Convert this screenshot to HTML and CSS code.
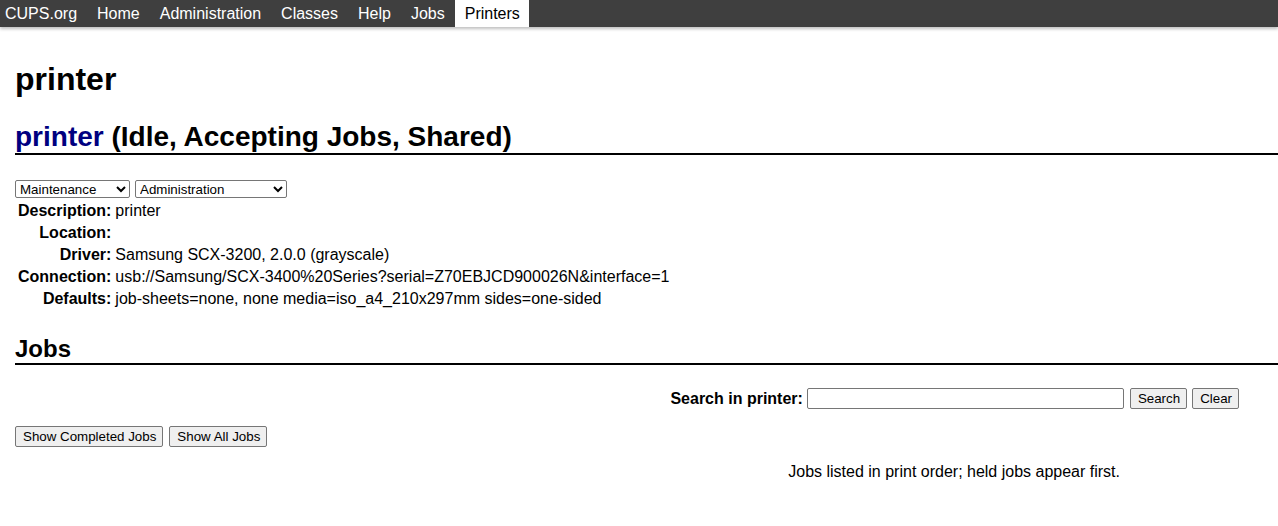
FILE: index.html
```html
<!DOCTYPE html>
<html>
<head>
<meta charset="utf-8">
<title>printer - CUPS</title>
<link rel="stylesheet" href="styles.css">
</head>
<body>
<nav class="topbar">
  <a class="nav-item first" href="#">CUPS.org</a>
  <a class="nav-item" href="#">Home</a>
  <a class="nav-item" href="#">Administration</a>
  <a class="nav-item" href="#">Classes</a>
  <a class="nav-item" href="#">Help</a>
  <a class="nav-item" href="#">Jobs</a>
  <a class="nav-item active" href="#">Printers</a>
</nav>
<main class="content">
  <h1 class="title">printer</h1>
  <h2 class="section printer-head"><a class="plink" href="#">printer</a> (Idle, Accepting Jobs, Shared)</h2>
  <div class="controls">
    <select class="sel sel-maint"><option>Maintenance</option></select>
    <select class="sel sel-admin"><option>Administration</option></select>
  </div>
  <table class="info">
    <tr><th>Description:</th><td>printer</td></tr>
    <tr><th>Location:</th><td></td></tr>
    <tr><th>Driver:</th><td>Samsung SCX-3200, 2.0.0 (grayscale)</td></tr>
    <tr><th>Connection:</th><td>usb://Samsung/SCX-3400%20Series?serial=Z70EBJCD900026N&amp;interface=1</td></tr>
    <tr><th>Defaults:</th><td>job-sheets=none, none media=iso_a4_210x297mm sides=one-sided</td></tr>
  </table>
  <h2 class="section jobs-head">Jobs</h2>
  <form class="search-row">
    <label class="search-label">Search in printer:</label>
    <input class="search-input" type="text">
    <button class="btn" type="button">Search</button>
    <button class="btn" type="button">Clear</button>
  </form>
  <div class="job-buttons">
    <button class="btn" type="button">Show Completed Jobs</button>
    <button class="btn" type="button">Show All Jobs</button>
  </div>
  <div class="note-row">
    <p class="note">Jobs listed in print order; held jobs appear first.</p>
  </div>
</main>
</body>
</html>
```
FILE: styles.css
```css
html, body {
  margin: 0;
  padding: 0;
  background: #ffffff;
  color: #000000;
  font-family: "Liberation Sans", Arial, sans-serif;
  font-size: 16px;
}

.topbar {
  display: flex;
  height: 27px;
  background: #3f3f3f;
  box-shadow: 0 2px 3px rgba(0, 0, 0, 0.25);
}

.nav-item {
  display: block;
  padding: 0 10px;
  line-height: 27px;
  color: #ffffff;
  text-decoration: none;
}

.nav-item.first {
  padding-left: 5px;
}

.nav-item.active {
  background: #ffffff;
  color: #000000;
  padding: 0 9px 0 10px;
}

.content {
  padding: 0 0 0 15px;
}

.title {
  font-size: 32px;
  font-weight: bold;
  margin: 34px 0 0 0;
  line-height: 37px;
}

.section {
  font-weight: bold;
  margin: 0;
  border-bottom: 2px solid #000000;
}

.printer-head {
  font-size: 28px;
  line-height: 32px;
  margin-top: 23px;
  padding-bottom: 0;
}

.plink {
  color: #000080;
  text-decoration: none;
}

.controls {
  display: flex;
  gap: 5px;
  margin-top: 25px;
}

.sel {
  height: 18px;
  font-family: "Liberation Sans", Arial, sans-serif;
  font-size: 13.33px;
  padding: 0;
  border: 1px solid #767676;
  border-radius: 2px;
  background: #ffffff;
  color: #000000;
}

.sel-maint {
  width: 115px;
}

.sel-admin {
  width: 152px;
}

.info {
  border-collapse: collapse;
  margin-top: 2px;
}

.info th {
  text-align: right;
  font-weight: bold;
  padding: 0 2px 0 3px;
  height: 22px;
  white-space: nowrap;
}

.info td {
  padding: 0 2px;
  height: 22px;
}

.jobs-head {
  font-size: 24px;
  line-height: 28px;
  margin-top: 25px;
  padding-bottom: 0;
}

.search-row {
  display: flex;
  justify-content: flex-end;
  align-items: center;
  gap: 5px;
  margin: 23px 39px 0 0;
}

.search-label {
  font-weight: bold;
  margin-right: -1px;
}

.search-input {
  width: 313px;
  height: 17px;
  padding: 1px;
  border: 1px solid #767676;
  border-radius: 2px;
  margin-right: 1px;
}

.btn {
  height: 21px;
  padding: 1px 6px 1px 7px;
  font-family: "Liberation Sans", Arial, sans-serif;
  font-size: 13.33px;
  background: #efefef;
  border: 1px solid #767676;
  border-radius: 2px;
  color: #000000;
}

.job-buttons {
  display: flex;
  gap: 6px;
  margin-top: 17px;
}

.note-row {
  display: flex;
  justify-content: flex-end;
  padding-right: 158px;
}

.note {
  margin: 16px 0 0 0;
}
```
